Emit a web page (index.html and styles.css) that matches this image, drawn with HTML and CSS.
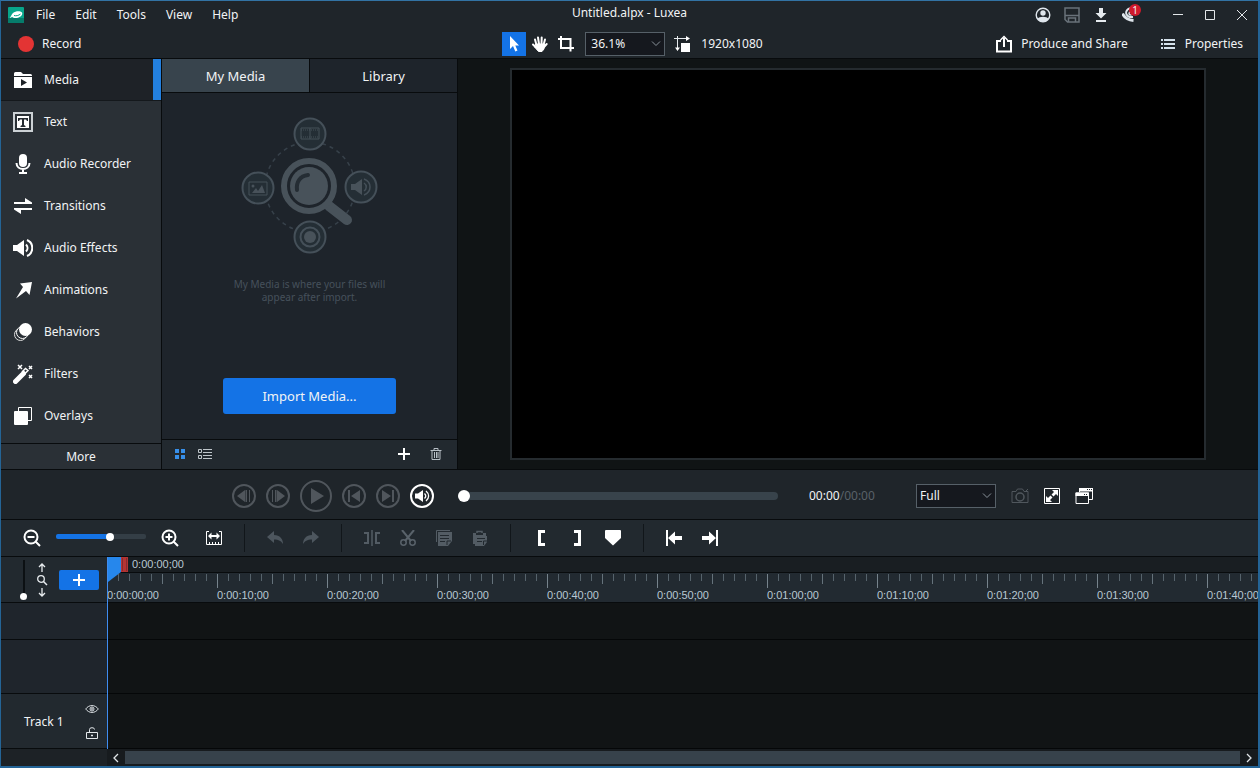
FILE: index.html
```html
<!DOCTYPE html>
<html lang="en">
<head>
<meta charset="utf-8">
<title>Untitled.alpx - Luxea</title>
<link rel="stylesheet" href="styles.css">
</head>
<body>
<div class="app">
  <header class="titlebar">
    <nav class="menu">
      <svg class="logo" width="16" height="16" viewBox="0 0 16 16"><rect width="16" height="16" rx="1" fill="#08a58a"/><path d="M0 11h16v5H0z" fill="#067c6b"/><path d="M1.500 10.500C3 10.500 3 8 5 6c2.500-2 7-2.500 9-.5 1 2-1 4.500-4 5.200-3 .6-5 0-6-1-.7 1-1.500 1.300-2.500.8z" fill="#fff"/><path d="M6 8.500c2 .6 4.500.2 6.500-1.500" stroke="#08a58a" fill="none"/></svg>
      <button>File</button><button>Edit</button><button>Tools</button><button>View</button><button>Help</button>
    </nav>
    <h1 class="title">Untitled.alpx - Luxea</h1>
    <div class="window-tools">
      <button class="sys" aria-label="Account"><svg width="16" height="16" viewBox="0 0 16 16"><circle cx="8" cy="8" r="6.800" fill="none" stroke="#dfe6ec" stroke-width="1.400"/><circle cx="8" cy="6" r="2.700" fill="#dfe6ec"/><path d="M2.500 12c1.500-3 9.500-3 11 0-2 4-9 4-11 0z" fill="#dfe6ec"/></svg></button>
      <button class="sys" aria-label="Save"><svg width="16" height="16" viewBox="0 0 16 16" fill="none" stroke="#69727a" stroke-width="1.500"><path d="M1 1h14v14H3.500L1 12.500zM1 8.500h14M4.500 15v-4h7v4"/></svg></button>
      <button class="sys" aria-label="Download"><svg width="16" height="16" viewBox="0 0 16 16" fill="#e6ebef"><path d="M6 1h4v5h3.500L8 11.500 2.500 6H6zM3 13h10v2H3z"/></svg></button>
      <button class="sys notice" aria-label="Notifications"><svg width="16" height="16" viewBox="0 0 16 16" fill="none" stroke="#dfe6ec"><path d="M.5 6.500C2 10 5 13 11.500 13.500" stroke-width="3"/><path d="M4 5.500C5 2 8 1 11 1.500M4 5.500c0 3 3 5 7 4.500" stroke-width="2"/><circle cx="8.500" cy="6.500" r="1.500" stroke-width="1.500"/></svg><span class="badge">1</span></button>
      <button class="win" aria-label="Minimize"><svg width="12" height="12" viewBox="0 0 12 12"><path d="M1 5.500h10" stroke="#e3e7ea"/></svg></button>
      <button class="win" aria-label="Maximize"><svg width="12" height="12" viewBox="0 0 12 12"><path d="M1.500 1.500h9v9h-9z" fill="none" stroke="#e3e7ea"/></svg></button>
      <button class="win" aria-label="Close"><svg width="12" height="12" viewBox="0 0 12 12"><path d="M1 1l10 10M11 1L1 11" stroke="#e3e7ea"/></svg></button>
    </div>
  </header>

  <div class="mainbar">
    <button class="record"><span class="dot"></span>Record</button>
    <div class="canvas-tools">
      <button class="tool active" aria-label="Select"><svg width="16" height="18" viewBox="0 0 16 18"><path d="M4 1v13l3-3 2.300 5.500 2.200-1L9.300 10.500H13z" fill="#fff"/></svg></button>
      <button class="tool" aria-label="Pan"><svg width="18" height="18" viewBox="0 0 18 18" fill="none" stroke="#fff" stroke-linecap="round"><path d="M5.500 10L4 4.500M8 9L7 2.500M10.500 9l.2-6.500M12.500 10l1.500-5.500" stroke-width="2"/><path d="M4.500 12L2 9.500M13 12l2.700-3" stroke-width="2"/><path d="M5 9h8.500l-.5 5-2 2.500H7.500L4 12.500z" fill="#fff" stroke-width="1"/></svg></button>
      <button class="tool" aria-label="Crop"><svg width="18" height="18" viewBox="0 0 18 18" fill="none" stroke="#fff" stroke-width="2"><path d="M4 1v12h13M1 4h12.500v12.500"/></svg></button>
      <div class="select zoom-select"><select aria-label="Canvas zoom"><option>36.1%</option></select><svg width="10" height="6" viewBox="0 0 10 6"><path d="M1 .5l4 4 4-4"/></svg></div>
      <button class="size"><svg width="18" height="18" viewBox="0 0 18 18"><path d="M4.500 1v13M1 3.500h13" stroke="#e6eaed" fill="none"/><path d="M2 12.500h5L4.500 16zM13 1v5l4-2.500z" fill="#fff"/><path d="M8 8h9v9H8z" fill="#fff"/></svg>1920x1080</button>
    </div>
    <div class="actions">
      <button><svg width="18" height="18" viewBox="0 0 18 18" fill="none" stroke="#fff" stroke-width="2"><path d="M6 6H2v10.500h14V6h-4M9 12V3"/><path d="M5.500 5L9 1.500 12.500 5" stroke-width="1.500"/></svg>Produce and Share</button>
      <button class="props"><svg width="14" height="12" viewBox="0 0 14 12" stroke="#d5e2ec" stroke-width="2"><path d="M0 2h2m1 0h11M0 6h2m1 0h11M0 10h2m1 0h11"/></svg>Properties</button>
    </div>
  </div>

  <main class="workspace">
    <aside class="sidebar">
      <nav class="categories">
        <button class="cat active"><svg width="20" height="20" viewBox="0 0 20 20"><path d="M1 3.500Q1 2 2.500 2H8l2 2h7.500Q19 4 19 5.500V6H1zM1 7h18v11H1z" fill="#fff"/><path d="M8 9l6 3.500L8 16z" fill="#1e2227"/></svg>Media</button>
        <button class="cat"><svg width="20" height="20" viewBox="0 0 20 20"><path d="M1 1h18v18H1z" fill="none" stroke="#ccd1d5" stroke-width="2"/><path d="M4 4h12v12H4z" fill="#fff"/><path d="M5 6h10v3h-1l-1-1.500h-2V13l1.500 1v1h-5v-1L9 13V7.500H7L6 9H5z" fill="#252b31"/></svg>Text</button>
        <button class="cat"><svg width="20" height="20" viewBox="0 0 20 20"><rect x="6" y="0" width="8" height="13" rx="4" fill="#fff"/><path d="M3.500 9c0 8 13 8 13 0M10 15v4M6 19h8" fill="none" stroke="#fff" stroke-width="2"/></svg>Audio Recorder</button>
        <button class="cat"><svg width="20" height="20" viewBox="0 0 20 20" fill="#fff"><path d="M1 6h11V2l7 4.500V8H1zM19 12H1v1.500L8 18v-4h11z"/></svg>Transitions</button>
        <button class="cat"><svg width="20" height="20" viewBox="0 0 20 20"><path d="M0 7h4l7-5v16l-7-5H0z" fill="#fff"/><path d="M13 6.500c2 2 2 5 0 7M14 2c7 3 7 13 0 16" fill="none" stroke="#fff" stroke-width="2"/></svg>Audio Effects</button>
        <button class="cat"><svg width="20" height="20" viewBox="0 0 20 20" fill="#fff"><path d="M3 18.500L10 7 7 3.500 19 2l-2.500 13-3.500-4z"/></svg>Animations</button>
        <button class="cat"><svg width="20" height="20" viewBox="0 0 20 20"><circle cx="7.500" cy="12.500" r="6" fill="#2a3036" stroke="#ddd"/><circle cx="9.500" cy="10.500" r="6" fill="#2a3036" stroke="#fff"/><circle cx="12.500" cy="7.500" r="6.500" fill="#fff"/></svg>Behaviors</button>
        <button class="cat"><svg width="20" height="20" viewBox="0 0 20 20" fill="none" stroke="#fff"><path d="M2.500 17.500l8-8" stroke-width="5" stroke-linecap="round"/><path d="M9 8l3.500-3.500 2.500 2L11.500 10" stroke-width="1.500"/><path d="M5 1l4 4m0-4L5 5M16 2l3 3m0-3l-3 3M16 11l3 3m0-3l-3 3" stroke-width="1.500"/></svg>Filters</button>
        <button class="cat"><svg width="20" height="20" viewBox="0 0 20 20"><path d="M5.500 5V1.500h13v13H15" fill="none" stroke="#fff"/><rect x="1" y="5" width="14" height="14" rx="1" fill="#fff"/></svg>Overlays</button>
      </nav>
      <button class="more">More</button>
    </aside>

    <section class="media">
      <div class="tabs"><button class="tab active">My Media</button><button class="tab">Library</button></div>
      <div class="media-body">
        <svg class="empty-art" width="138" height="138" viewBox="0 0 138 138" fill="none" stroke="#455059" stroke-width="2">
          <circle cx="69" cy="71" r="45" stroke="#37414a" stroke-width="1.500" stroke-dasharray="4 4"/>
          <g fill="#242e35"><circle cx="69" cy="18" r="15.500"/><circle cx="17" cy="72" r="15.500"/><circle cx="120" cy="71" r="15.500"/><circle cx="69" cy="121" r="15.500"/></g>
          <path d="M88 90l18 14" stroke="#48525a" stroke-width="10" stroke-linecap="round"/>
          <circle cx="68" cy="70" r="25" fill="#1e242b" stroke="#48525a" stroke-width="6"/><circle cx="68" cy="70" r="19" fill="#48525a" stroke="none"/>
          <path d="M56 74c-1-8 3-14 11-15" stroke="#252d34" stroke-width="4" stroke-linecap="round"/>
          <path d="M60 12h18v11H60zM69 12v11" stroke-width="1"/><path d="M60 14h18M60 21h18" stroke-width="1" stroke-dasharray="1 1"/>
          <path d="M8 66h18v13H8z" stroke-width="1"/><path d="M11 77l4-5 2 3 4-6 3 8z" fill="#48525a" stroke="none"/><circle cx="12" cy="70" r="1.500" fill="#48525a" stroke="none"/>
          <path d="M110 68h4l7-5v16l-7-5h-4z" fill="#48525a" stroke="none"/><path d="M123 67c3 2 3 6 0 8M123 63c8 3 8 13 0 16" stroke-width="1.500"/>
          <circle cx="69" cy="121" r="9.500"/><circle cx="69" cy="121" r="6" fill="#48525a" stroke="none"/>
        </svg>
        <p class="hint">My Media is where your files will<br>appear after import.</p>
        <button class="import">Import Media...</button>
      </div>
      <div class="media-foot">
        <button aria-label="Grid view"><svg width="12" height="12" viewBox="0 0 12 12" fill="#378fe9"><path d="M1 1h4v4H1zM7 1h4v4H7zM1 7h4v4H1zM7 7h4v4H7z"/></svg></button>
        <button aria-label="List view"><svg width="14" height="12" viewBox="0 0 14 12" fill="none" stroke="#bfc6cb"><path d="M.5 1.500h3v3h-3zM.5 7.500h3v3h-3zM5 1.500h9M5 4.500h9M5 7.500h9M5 10.500h9"/></svg></button>
        <span class="spacer"></span>
        <button aria-label="Add media"><svg width="12" height="12" viewBox="0 0 12 12"><path d="M6 0v12M0 6h12" stroke="#fff" stroke-width="2"/></svg></button>
        <button aria-label="Delete"><svg width="12" height="14" viewBox="0 0 12 14" fill="none" stroke="#b7bfc5"><path d="M.5 3.500h11M4 3V1.500h4V3M2 4v8.500h8V4M4.500 5v6M6.500 5v6M8 5v6"/></svg></button>
      </div>
    </section>

    <section class="preview"><div class="screen"></div></section>
  </main>

  <section class="playback">
    <div class="transport">
      <button disabled aria-label="Previous frame"><svg width="24" height="24" viewBox="0 0 24 24"><circle cx="12" cy="12" r="11"/><path class="f" d="M5 12l8-6v12zM13.500 6H15v12h-1.500zM17 6h1v12h-1z"/></svg></button>
      <button disabled aria-label="Next frame"><svg width="24" height="24" viewBox="0 0 24 24"><circle cx="12" cy="12" r="11"/><path class="f" d="M19 12l-8-6v12zM9 6h1.500v12H9zM6 6h1v12H6z"/></svg></button>
      <button disabled aria-label="Play"><svg width="32" height="32" viewBox="0 0 32 32"><circle cx="16" cy="16" r="15"/><path class="f" d="M11 8l13 8-13 8z"/></svg></button>
      <button disabled aria-label="To start"><svg width="24" height="24" viewBox="0 0 24 24"><circle cx="12" cy="12" r="11"/><path class="f" d="M9 12l9-6v12zM6 6h2v12H6z"/></svg></button>
      <button disabled aria-label="To end"><svg width="24" height="24" viewBox="0 0 24 24"><circle cx="12" cy="12" r="11"/><path class="f" d="M15 12L6 6v12zM16 6h2v12h-2z"/></svg></button>
      <button class="on" aria-label="Volume"><svg width="24" height="24" viewBox="0 0 24 24"><circle cx="12" cy="12" r="11"/><path class="f" d="M5 9.500h3L13 6v12l-5-3.500H5z"/><path d="M14.500 9.500c1.500 1.500 1.500 3.500 0 5M16 7c3.500 3 3.500 7 0 10" stroke-width="1.300"/></svg></button>
    </div>
    <input class="seek" type="range" min="0" max="100" value="0" aria-label="Seek">
    <div class="time">00:00<span>/00:00</span></div>
    <div class="select quality"><select aria-label="Preview quality"><option>Full</option></select><svg width="10" height="6" viewBox="0 0 10 6"><path d="M1 .5l4 4 4-4"/></svg></div>
    <div class="view-tools">
      <button disabled aria-label="Snapshot"><svg width="18" height="16" viewBox="0 0 18 16" fill="none" stroke="#50575d"><path d="M1 3.500h4L6.500 1h5L13 3.500h4v11H1z"/><circle cx="9" cy="9" r="4" stroke-width="1.500"/><path d="M14 4l3-3"/></svg></button>
      <button aria-label="Full screen"><svg width="16" height="16" viewBox="0 0 16 16"><path d="M.5.5h15v15H.5z" fill="none" stroke="#fff"/><path d="M8 2h6v6l-2-2-2.500 2.500-2-2L10 4zM8 14H2V8l2 2 2.500-2.500 2 2L6 12z" fill="#fff"/></svg></button>
      <button aria-label="Detach preview"><svg width="18" height="16" viewBox="0 0 18 16"><path d="M4.500 4V.5h13v11H14M1 5h12.500v10.500H1z" fill="none" stroke="#fff"/><path d="M4 0h14v3.500H4zM.5 4.500H14v3.500H.5z" fill="#fff"/><path d="M12 1.500h1m1 0h1m1 0h1M9 6.500h1m1 0h1" stroke="#1f252a"/></svg></button>
    </div>
  </section>

  <div class="editbar">
    <button aria-label="Zoom out"><svg width="18" height="18" viewBox="0 0 18 18" fill="none" stroke="#fff" stroke-width="2"><circle cx="8" cy="8" r="6.500"/><path d="M12.500 12.500L17 17M4.500 8h7"/></svg></button>
    <input class="zoom" type="range" min="0" max="100" value="61" aria-label="Timeline zoom">
    <button aria-label="Zoom in"><svg width="18" height="18" viewBox="0 0 18 18" fill="none" stroke="#fff" stroke-width="2"><circle cx="8" cy="8" r="6.500"/><path d="M12.500 12.500L17 17M4.500 8h7M8 4.500v7"/></svg></button>
    <button class="fit" aria-label="Fit timeline"><svg width="16" height="16" viewBox="0 0 16 16" fill="none" stroke="#fff"><path d="M3 1.500H.5v13h15v-13H13M3.500 14v-2M6.500 14v-2M9.500 14v-2M12.500 14v-2"/><path d="M4 6h8" stroke-width="2"/><path d="M5.500 2.500v7L2 6zM10.500 2.500v7L14 6z" fill="#fff" stroke="none"/></svg></button>
    <span class="sep"></span>
    <button disabled aria-label="Undo"><svg width="16" height="14" viewBox="0 0 16 14" fill="#4d565e"><path d="M0 6l7-6v4c6 0 9 4 9 9-2-3-4-4.500-9-4.500V12z"/></svg></button>
    <button disabled aria-label="Redo"><svg width="16" height="14" viewBox="0 0 16 14" fill="#4d565e"><path d="M16 6L9 0v4c-6 0-9 4-9 9 2-3 4-4.500 9-4.500V12z"/></svg></button>
    <span class="sep"></span>
    <button disabled aria-label="Split"><svg width="18" height="16" viewBox="0 0 18 16" fill="none" stroke="#535c64" stroke-width="2"><path d="M1 3h4v10H1M17 3h-4v10h4"/><path d="M9 0v16" stroke-width="1.500"/></svg></button>
    <button disabled aria-label="Cut"><svg width="16" height="16" viewBox="0 0 16 16" fill="none" stroke="#59626a" stroke-width="1.500"><path d="M2 0l9 11M14 0L5 11" stroke-width="2"/><circle cx="3.500" cy="12.500" r="2.700"/><circle cx="12.500" cy="12.500" r="2.700"/></svg></button>
    <button disabled aria-label="Copy"><svg width="16" height="16" viewBox="0 0 16 16"><path d="M.5 12V.5H14" fill="none" stroke="#535c64"/><path d="M2 2h14v9l-4 5H2z" fill="#535c64"/><path d="M4 5.500h9M4 8.500h9M4 11.500h5M11 15v-4h4" fill="none" stroke="#22292f"/></svg></button>
    <button disabled aria-label="Paste"><svg width="16" height="16" viewBox="0 0 16 16"><path d="M1 3h3v2h7V3h3v3H6v8H1z" fill="#535c64"/><path d="M5 3V1.500h5V3" fill="none" stroke="#535c64" stroke-width="1.500"/><path d="M3 6h12v6l-3 4H3z" fill="#535c64"/><path d="M5 8.500h8M5 11.500h5M11.500 15v-4H15" fill="none" stroke="#22292f"/></svg></button>
    <span class="sep"></span>
    <button aria-label="Set in point"><svg width="16" height="16" viewBox="0 0 16 16"><path d="M5 0h7v3H8v10h4v3H5z" fill="#fff"/></svg></button>
    <button aria-label="Set out point"><svg width="16" height="16" viewBox="0 0 16 16"><path d="M12 0H5v3h4v10H5v3h7z" fill="#fff"/></svg></button>
    <button aria-label="Add marker"><svg width="16" height="16" viewBox="0 0 16 16"><path d="M0 1q0-1 1-1h14q1 0 1 1v7l-8 7.500L0 8z" fill="#fff"/></svg></button>
    <span class="sep"></span>
    <button aria-label="Previous marker"><svg width="16" height="16" viewBox="0 0 16 16" fill="#fff"><path d="M0 0h2v16H0zM2 8l7-6.500V6h7v4H9v4.500z"/></svg></button>
    <button aria-label="Next marker"><svg width="16" height="16" viewBox="0 0 16 16" fill="#fff"><path d="M14 0h2v16h-2zM14 8L7 1.500V6H0v4h7v4.500z"/></svg></button>
  </div>

  <section class="timeline">
    <div class="track-tools">
      <input class="height" type="range" min="0" max="100" value="0" aria-label="Track height">
      <svg width="12" height="34" viewBox="0 0 12 34" fill="none" stroke="#e8ecef"><path d="M6 1v8M3 4L6 1l3 3M6 25v8M3 30l3 3 3-3" stroke-width="1.300"/><circle cx="5" cy="16" r="3.300" stroke-width="1.300"/><path d="M7.500 18.500L11 22" stroke-width="1.500"/></svg>
      <button class="add-track" aria-label="Add track"><svg width="12" height="12" viewBox="0 0 12 12"><path d="M6 0v12M0 6h12" stroke="#fff" stroke-width="2"/></svg></button>
    </div>
    <div class="ruler">
      <div class="current">0:00:00;00</div>
      <div class="scale">
        <span>0:00:00;00</span><span>0:00:10;00</span><span>0:00:20;00</span><span>0:00:30;00</span><span>0:00:40;00</span><span>0:00:50;00</span><span>0:01:00;00</span><span>0:01:10;00</span><span>0:01:20;00</span><span>0:01:30;00</span><span>0:01:40;00</span>
      </div>
    </div>
    <div class="head"></div><div class="lane"></div>
    <div class="head"></div><div class="lane"></div>
    <div class="head track">
      <span>Track 1</span>
      <div class="track-icons">
        <button aria-label="Hide track"><svg width="14" height="8" viewBox="0 0 14 8" fill="none" stroke="#d9dee2"><path d="M.7 4C4-.6 10-.6 13.300 4 10 8.600 4 8.600.7 4z"/><circle cx="7" cy="4" r="2"/><circle cx="7" cy="4" r=".6"/></svg></button>
        <button aria-label="Lock track"><svg width="12" height="12" viewBox="0 0 12 12" fill="none" stroke="#e3e7ea"><path d="M.5 5.500h11v6H.5zM3.500 5V2.500Q3.500.7 6 .7T8.500 2.500"/><path d="M5 8.500h2" stroke-width="1.500"/></svg></button>
      </div>
    </div><div class="lane"></div>
    <div class="corner"></div>
    <div class="scroll">
      <button aria-label="Scroll left"><svg width="6" height="10" viewBox="0 0 6 10"><path d="M5 1L1 5l4 4"/></svg></button>
      <div class="thumb"></div>
      <button aria-label="Scroll right"><svg width="6" height="10" viewBox="0 0 6 10"><path d="M1 1l4 4-4 4"/></svg></button>
    </div>
    <div class="playhead"><svg width="20" height="26" viewBox="0 0 20 26"><path d="M0 0h13v15L0 25z" fill="#2687ec"/><path d="M13 0h7v15h-7z" fill="#b33434"/><path d="M14.500 1v13M18.500 1v13" stroke="#852b2e"/></svg></div>
  </section>
</div>
</body>
</html>
```
FILE: styles.css
```css
:root {
  --line: #080b0d;
  --bar: #1f252a;
  --tool: #22292f;
  --blue: #1473e6;
}
* { box-sizing: border-box; }
body {
  margin: 0;
  background: var(--bar);
  color: #f1f3f5;
  font: 12px/16px "Noto Sans", sans-serif;
}
button, select {
  margin: 0;
  padding: 0;
  border: 0;
  background: none;
  color: inherit;
  font: inherit;
}
button {
  display: flex;
  align-items: center;
  justify-content: center;
}
svg { display: block; flex: none; }
.app {
  display: flex;
  flex-direction: column;
  min-height: 100vh;
  border: 1px solid #246496;
  border-right-width: 2px;
  border-bottom-width: 2px;
  border-top-color: #3273a4;
}

/* Title bar */
.titlebar {
  display: grid;
  grid-template-columns: 1fr auto 1fr;
  height: 28px;
}
.menu { display: flex; align-items: center; padding-left: 7px; }
.logo { margin-right: 2px; }
.menu button { padding: 0 10px; }
.title { margin: 0; padding-top: 4px; font-size: 12px; font-weight: 400; }
.window-tools { display: flex; justify-content: flex-end; align-items: center; }
.sys { width: 29px; }
.notice { position: relative; }
.badge {
  position: absolute;
  top: -3px;
  right: 3px;
  width: 12px;
  height: 12px;
  border-radius: 6px;
  background: #d01a2c;
  font-size: 10px;
  line-height: 12px;
  text-align: center;
}
.win { width: 32px; }
.notice + .win { margin-left: 18px; }

/* Main toolbar */
.mainbar {
  display: grid;
  grid-template-columns: 1fr auto 1fr;
  align-items: center;
  height: 30px;
  border-bottom: 1px solid var(--line);
}
.record { justify-self: start; gap: 8px; padding-left: 17px; }
.dot { width: 16px; height: 16px; border-radius: 8px; background: #e33434; }
.canvas-tools { display: flex; align-items: center; gap: 2px; padding-left: 6px; }
.tool { width: 24px; height: 24px; }
.active.tool { background: var(--blue); }
.select { display: grid; align-items: center; width: 80px; height: 24px; }
.select select {
  grid-area: 1 / 1;
  height: 24px;
  padding: 0 5px;
  border: 1px solid #566068;
  background: #15181e;
  appearance: none;
}
.quality select { padding: 0 3px; }
.select svg {
  grid-area: 1 / 1;
  justify-self: end;
  margin-right: 4px;
  fill: none;
  stroke: #899199;
  pointer-events: none;
}
.zoom-select { margin: 0 6px 0 5px; }
.size { gap: 10px; }
.actions { display: flex; justify-content: flex-end; gap: 33px; padding-right: 15px; }
.actions button { gap: 8px; }
.actions .props { gap: 10px; }

/* Workspace */
.workspace { display: flex; flex: 1; min-height: 411px; border-bottom: 1px solid var(--line); }
.sidebar {
  display: flex;
  flex-direction: column;
  width: 161px;
  border-right: 1px solid var(--line);
  background: #2a3036;
}
.categories { display: flex; flex-direction: column; flex: 1; }
.cat { justify-content: flex-start; gap: 11px; height: 42px; padding-left: 12px; }
.cat.active {
  border-bottom: 1px solid #14181c;
  background: linear-gradient(#2380df, #2380df) right / 8px 100% no-repeat #1e2227;
}
.more { height: 26px; border-top: 1px solid var(--line); }
.media {
  display: flex;
  flex-direction: column;
  width: 296px;
  border-right: 1px solid var(--line);
  background: #1e242b;
}
.tabs { display: flex; height: 34px; border-bottom: 1px solid var(--line); font-size: 13px; }
.tab { flex: 1; }
.tab.active { border-right: 1px solid var(--line); background: #38444d; }
.media-body { display: flex; flex: 1; flex-direction: column; align-items: center; }
.empty-art { margin-top: 23px; }
.hint { margin: 24px 0 74px; color: #46515b; font-size: 10px; line-height: 13px; text-align: center; }
.import {
  width: 173px;
  height: 36px;
  border-radius: 3px;
  background: var(--blue);
  font-size: 13px;
}
.media-foot {
  display: flex;
  align-items: center;
  gap: 12px;
  height: 30px;
  padding: 0 15px 2px 12px;
  border-top: 1px solid var(--line);
  background: var(--tool);
}
.spacer { flex: 1; }
.media-foot .spacer + button { margin-right: 8px; }
.preview { display: flex; flex: 1; justify-content: center; padding: 9px; background: #101415; }
.screen { aspect-ratio: 696 / 392; border: 2px solid #252b2f; background: #000; }

/* Sliders */
input { margin: 0; background: none; appearance: none; }
.seek::-webkit-slider-runnable-track { height: 8px; border-radius: 4px; background: #38434b; }
.seek::-webkit-slider-thumb {
  width: 12px;
  height: 12px;
  margin-top: -2px;
  border-radius: 6px;
  background: #fff;
  appearance: none;
}
.zoom::-webkit-slider-runnable-track {
  height: 5px;
  border-radius: 2px;
  background: linear-gradient(90deg, var(--blue) 60%, #343e46 60%);
}
.zoom::-webkit-slider-thumb {
  width: 8px;
  height: 8px;
  margin-top: -1px;
  border-radius: 4px;
  background: #fff;
  appearance: none;
}

/* Playback */
.playback { display: flex; align-items: center; height: 50px; padding: 2px 165px 0 231px; border-bottom: 1px solid var(--line); }
.transport { display: flex; align-items: center; gap: 10px; margin-right: 24px; }
.transport svg { fill: none; stroke: #50565c; stroke-width: 2; }
.transport .f { fill: #50565c; stroke: none; }
.transport .on svg { stroke: #fff; }
.transport .on .f { fill: #fff; }
.seek { flex: 1; height: 12px; }
.time { width: 69px; margin: 0 38px 0 31px; }
.time span { color: #596168; }
.view-tools { display: flex; gap: 15px; margin-left: 15px; }

/* Edit toolbar */
.editbar {
  display: flex;
  align-items: center;
  height: 37px;
  padding-left: 13px;
  border-bottom: 1px solid var(--line);
  background: var(--tool);
}
.editbar button { flex: none; width: 36px; height: 36px; }
.zoom { width: 90px; height: 12px; margin: 0 6px 4px; }
.editbar .fit { margin-left: 8px; }
.sep { flex: none; width: 1px; height: 28px; margin: 0 12px; background: #11161a; }

/* Timeline */
.timeline {
  position: relative;
  display: grid;
  grid-template-columns: 106px minmax(0, 1fr);
  grid-template-rows: 46px 37px 54px 55px 17px;
}
.track-tools {
  display: flex;
  align-items: center;
  padding-left: 19px;
  border-bottom: 1px solid var(--line);
  background: var(--tool);
}
.height { width: 8px; height: 40px; margin-right: 8px; writing-mode: vertical-lr; direction: rtl; }
.height::-webkit-slider-runnable-track { width: 2px; background: #0c1013; }
.height::-webkit-slider-thumb {
  width: 7px;
  height: 7px;
  margin-left: -3px;
  border-radius: 4px;
  background: #fff;
  appearance: none;
}
.add-track { width: 40px; height: 20px; margin-left: 11px; border-radius: 2px; background: var(--blue); }
.ruler {
  overflow: hidden;
  border-bottom: 1px solid var(--line);
  color: #b9c8d3;
  font: 11px/14px "Liberation Sans", sans-serif;
}
.current { height: 16px; padding-left: 25px; border-bottom: 1px solid var(--line); background: #191e22; }
.scale {
  display: flex;
  height: 29px;
  padding-top: 15px;
  background:
    linear-gradient(90deg, #76838c 1px, transparent 1px) 0 1px / 110px 14px repeat-x,
    linear-gradient(90deg, #65727b 1px, transparent 1px) 0 1px / 55px 10px repeat-x,
    linear-gradient(90deg, #56636c 1px, transparent 1px) 0 1px / 11px 7px repeat-x,
    #222a31;
}
.scale span { flex: none; width: 110px; }
.head { border-bottom: 1px solid var(--line); background: #1f252c; }
.lane { border-bottom: 1px solid #050708; background: #111415; }
.track { display: flex; align-items: center; justify-content: space-between; padding: 2px 8px 0 23px; background: var(--tool); }
.track-icons { display: grid; justify-items: center; gap: 14px; }
.corner { background: #1d2226; }
.scroll { display: flex; background: #171b1e; }
.scroll button { width: 18px; }
.scroll svg { fill: none; stroke: #e1e5e8; stroke-width: 1.300px; }
.thumb { flex: 1; margin: 2px 0; background: #37424b; }
.playhead {
  position: absolute;
  top: 0;
  bottom: 17px;
  left: 106px;
  border-left: 1px solid #3f8cf0;
  pointer-events: none;
}
```
